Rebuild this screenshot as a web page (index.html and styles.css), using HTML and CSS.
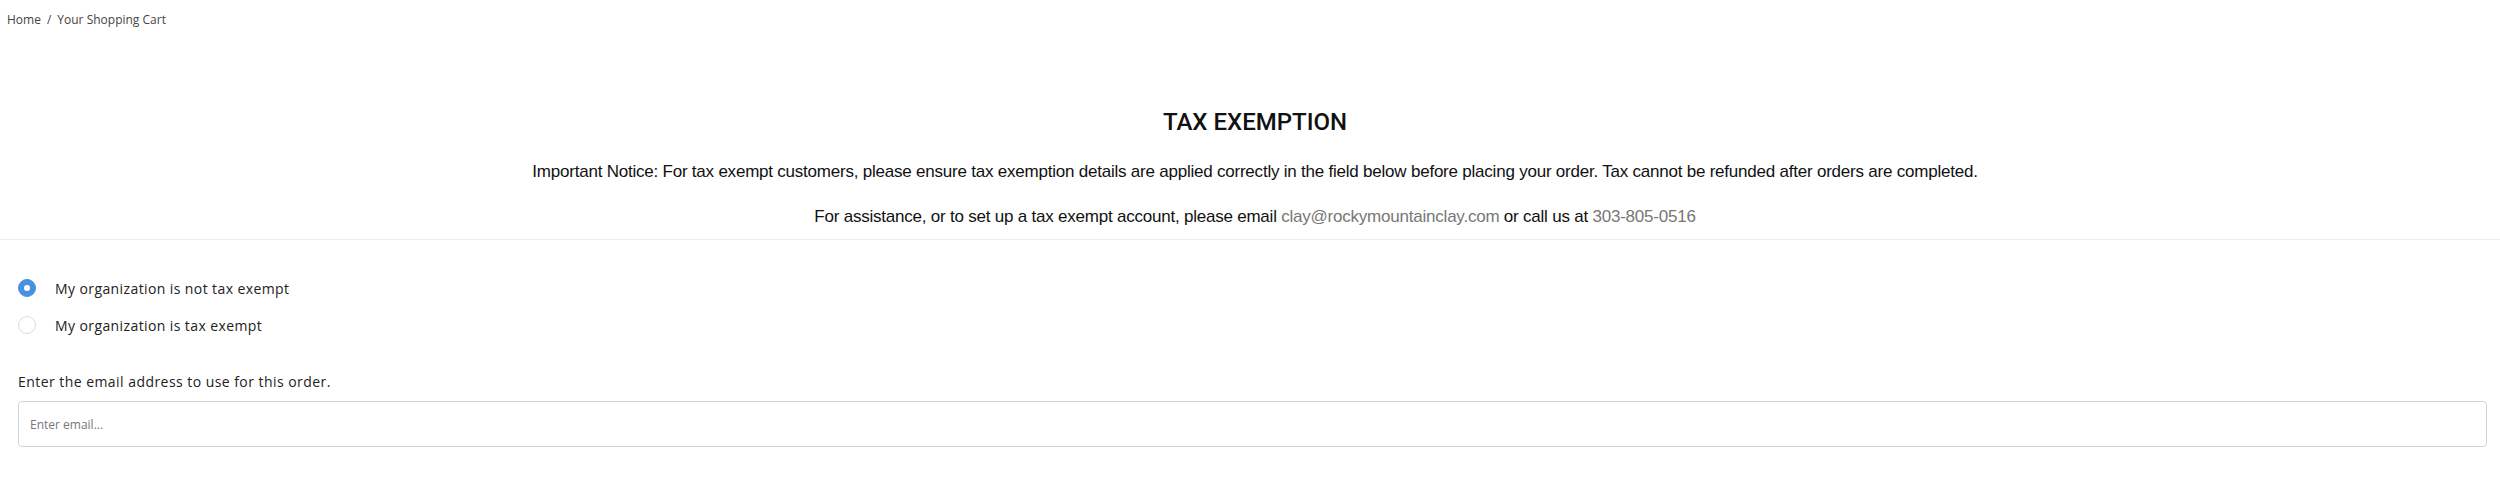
FILE: index.html
```html
<!DOCTYPE html>
<html lang="en">
<head>
<meta charset="utf-8">
<title>Your Shopping Cart</title>
<link rel="stylesheet" href="styles.css">
</head>
<body>
<nav class="breadcrumb"><a href="#">Home</a><span class="sep">/</span><span>Your Shopping Cart</span></nav>
<section class="tax">
  <h2 class="tax-title">TAX EXEMPTION</h2>
  <p class="notice">Important Notice: For tax exempt customers, please ensure tax exemption details are applied correctly in the field below before placing your order. Tax cannot be refunded after orders are completed.</p>
  <p class="notice second">For assistance, or to set up a tax exempt account, please email <a href="#">clay@rockymountainclay.com</a> or call us at <a href="#">303-805-0516</a></p>
</section>
<form class="form">
  <label class="radio-row"><input type="radio" name="exempt" checked><span class="radio"></span><span class="radio-label">My organization is not tax exempt</span></label>
  <label class="radio-row"><input type="radio" name="exempt"><span class="radio"></span><span class="radio-label">My organization is tax exempt</span></label>
  <div class="email-label">Enter the email address to use for this order.</div>
  <input class="email" type="text" placeholder="Enter email...">
</form>
</body>
</html>
```
FILE: styles.css
```css
html, body { margin: 0; padding: 0; background: #fff; }
body { font-family: "Open Sans", "Liberation Sans", sans-serif; color: #222; }
a { text-decoration: none; color: inherit; }
.breadcrumb { padding: 10px 7px; font-size: 12px; line-height: 20px; color: #444; }
.breadcrumb .sep { margin: 0 6px; }
.tax { border-bottom: 1px solid #ededed; padding-bottom: 9px; text-align: center; padding-left: 10px; }
.tax-title { margin: 67px 0 0; font-family: Roboto, sans-serif; font-weight: 500; font-size: 24px; line-height: 30px; color: #111; }
.notice { margin: 22px 0 0; font-family: "Liberation Sans", Arial, sans-serif; font-size: 17px; letter-spacing: -0.22px; line-height: 26px; color: #111; }
.notice.second { margin-top: 19px; }
.notice a { color: #777; }
.form { padding: 36px 13px 0 18px; }
.radio-row { display: flex; align-items: center; height: 24px; gap: 19px; cursor: pointer; }
.radio-row + .radio-row { margin-top: 13px; }
.radio-row input { display: none; }
.radio { width: 16px; height: 16px; border-radius: 50%; border: 1px solid #dcdcdc; background: #fff; box-sizing: content-box; position: relative; flex: none; }
.radio-row input:checked + .radio { background: #4a90e2; border-color: #4a90e2; }
.radio-row input:checked + .radio::after { content: ""; position: absolute; left: 5px; top: 5px; width: 6px; height: 6px; border-radius: 50%; background: #fff; }
.radio-label { font-size: 14px; letter-spacing: 0.4px; color: #222; }
.email-label { margin-top: 35px; font-size: 14px; line-height: 20px; letter-spacing: 0.45px; color: #222; }
.email { display: block; box-sizing: border-box; width: 100%; height: 46px; margin-top: 9px; border: 1px solid #cfd5dc; border-radius: 4px; padding: 0 11px; font-family: "Open Sans", sans-serif; font-size: 12px; color: #333; outline: none; }
.email::placeholder { color: #777; }
```
